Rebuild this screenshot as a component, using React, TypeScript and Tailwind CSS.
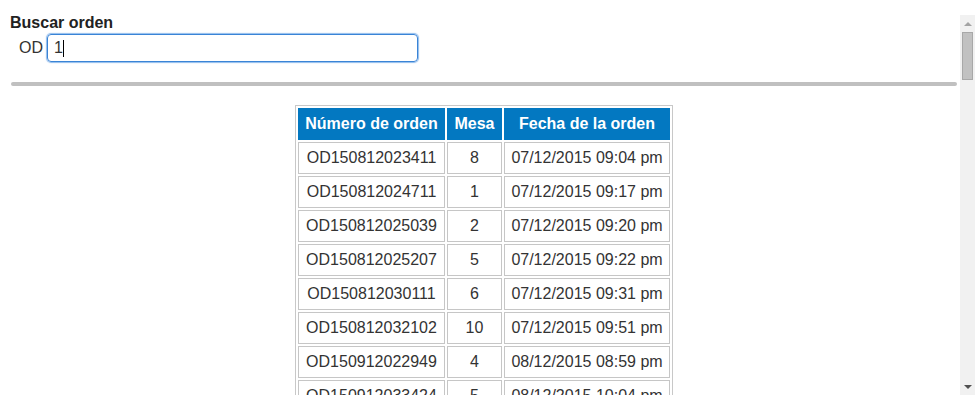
import React from "react";

const rows: [string, string, string][] = [
  ["OD150812023411", "8", "07/12/2015 09:04 pm"],
  ["OD150812024711", "1", "07/12/2015 09:17 pm"],
  ["OD150812025039", "2", "07/12/2015 09:20 pm"],
  ["OD150812025207", "5", "07/12/2015 09:22 pm"],
  ["OD150812030111", "6", "07/12/2015 09:31 pm"],
  ["OD150812032102", "10", "07/12/2015 09:51 pm"],
  ["OD150912022949", "4", "08/12/2015 08:59 pm"],
  ["OD150912033424", "5", "08/12/2015 10:04 pm"],
];

export default function App() {
  return (
    <div
      className="flex w-[975px] h-[407px] bg-white text-[#333] text-[16px] leading-[18px]"
      style={{ fontFamily: '"Liberation Sans", Arial, sans-serif' }}
    >
      <div className="w-[960px] h-[395px] overflow-hidden">
        <div className="pl-[10px] pt-[14px] font-bold text-[#222]">Buscar orden</div>
        <div className="flex items-center pl-[19px] mt-[2px]">
          <span className="mr-[4px]">OD</span>
          <div className="w-[371px] h-[28px] border border-[#3a84d6] rounded-[4px] shadow-[0_0_1px_1px_rgba(95,158,228,0.7)] flex items-center pl-[6px]">
            <span>1</span>
            <span className="w-px h-[17px] bg-black" />
          </div>
        </div>
        <div className="ml-[11px] mr-[3px] mt-[20px] h-[4px] rounded-full bg-[#c0c0c0]" />
        <div className="flex justify-center pl-[11px] pr-[3px] mt-[19px]">
          <table className="table-fixed w-[378px] border-separate border-spacing-[2px] border border-[#c8c8c8]">
            <thead>
              <tr>
                <th className="w-[147px] h-[32px] p-0 bg-[#0378c1] text-white font-bold">Número de orden</th>
                <th className="w-[55px] h-[32px] p-0 bg-[#0378c1] text-white font-bold">Mesa</th>
                <th className="w-[166px] h-[32px] p-0 bg-[#0378c1] text-white font-bold">Fecha de la orden</th>
              </tr>
            </thead>
            <tbody>
              {rows.map((r) => (
                <tr key={r[0]}>
                  <td className="h-[32px] p-0 border border-[#c6c6c6] text-center">{r[0]}</td>
                  <td className="h-[32px] p-0 border border-[#c6c6c6] text-center">{r[1]}</td>
                  <td className="h-[32px] p-0 border border-[#c6c6c6] text-center">{r[2]}</td>
                </tr>
              ))}
            </tbody>
          </table>
        </div>
      </div>
      <div className="w-[15px] mt-[15px] h-[380px] bg-[#f1f1f1] flex flex-col">
        <div className="h-[17px] flex items-center justify-center">
          <div className="w-0 h-0 border-l-[4px] border-r-[4px] border-b-[4px] border-l-transparent border-r-transparent border-b-[#a3a3a3]" />
        </div>
        <div className="mx-[2px] h-[48px] bg-[#c1c1c1] border border-[#a8a8a8]" />
        <div className="flex-1" />
        <div className="h-[17px] flex items-center justify-center">
          <div className="w-0 h-0 border-l-[4px] border-r-[4px] border-t-[4px] border-l-transparent border-r-transparent border-t-[#505050]" />
        </div>
      </div>
    </div>
  );
}
